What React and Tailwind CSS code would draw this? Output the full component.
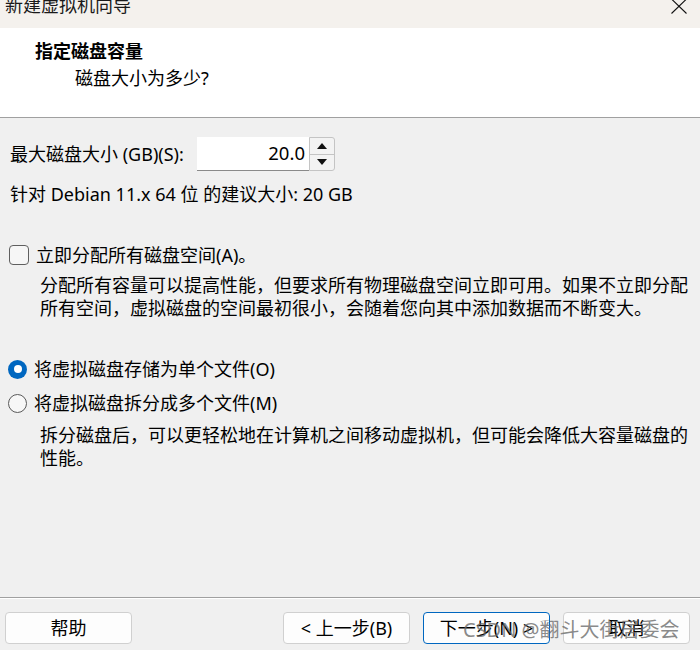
import React from 'react';

const font = "font-['Noto_Sans','Noto_Sans_CJK_SC',sans-serif]";

const Radio = ({ checked }) =>
    checked ? (
        <span className="flex size-[19px] items-center justify-center rounded-full bg-[#0067c0]">
            <span className="block size-[8px] rounded-full bg-white" />
        </span>
    ) : (
        <span className="block size-[19px] rounded-full border border-[#5a5a5a] bg-[#f7f7f7]" />
    );

const Button = ({ children, primary }) => (
    <button
        className={
            primary
                ? 'h-[32px] w-[127px] rounded-[4px] border border-[#0067c0] bg-[#fdfdfd] text-[18px] leading-none text-black'
                : 'h-[32px] w-[127px] rounded-[4px] border border-[#d0d0d0] bg-[#fdfdfd] text-[18px] leading-none text-black'
        }
    >
        {children}
    </button>
);

export default function App() {
    return (
        <div className={`relative flex h-[650px] w-[700px] flex-col overflow-hidden bg-[#f0f0f0] text-black ${font}`}>
            {/* title bar */}
            <div className="flex h-[28px] shrink-0 items-start justify-between bg-[#f4f1ed] pl-[5px] pr-[13px]">
                <span className="-mt-[4px] text-[18px] leading-[18px] text-[#1a1a1a]">新建虚拟机向导</span>
                <svg className="-mt-[1px]" width="16" height="15" viewBox="0 0 16 15">
                    <path d="M0.5 0 L15.5 14.5 M15.5 0 L0.5 14.5" stroke="#111" strokeWidth="1.1" fill="none" />
                </svg>
            </div>

            {/* header */}
            <div className="h-[90px] shrink-0 border-b border-[#a0a0a0] bg-white pt-[11px]">
                <div className="pl-[35px] text-[18px] font-bold leading-[24px]">指定磁盘容量</div>
                <div className="mt-[3px] pl-[75px] text-[18px] leading-[24px]">磁盘大小为多少?</div>
            </div>

            {/* body */}
            <div className="flex flex-1 flex-col pl-[10px] pr-[8px] text-[18px]">
                <div className="mt-[19px] flex h-[34px] items-center">
                    <span className="w-[187px] leading-[24px]">最大磁盘大小 (GB)(S):</span>
                    <div className="flex h-[34px] w-[112px] items-center justify-end border-b border-[#8a8a8a] bg-white pr-[4px] text-[18.5px] leading-none">
                        20.0
                    </div>
                    <div className="flex h-[34px] w-[26px] flex-col overflow-hidden rounded-r-[3px] border border-[#c4c4c4] bg-[#f3f3f3]">
                        <div className="flex flex-1 items-center justify-center border-b border-[#c4c4c4]">
                            <svg width="10" height="6" viewBox="0 0 10 6"><path d="M0 6 L5 0 L10 6 Z" fill="#111" /></svg>
                        </div>
                        <div className="flex flex-1 items-center justify-center">
                            <svg width="10" height="6" viewBox="0 0 10 6"><path d="M0 0 L5 6 L10 0 Z" fill="#111" /></svg>
                        </div>
                    </div>
                </div>

                <div className="mt-[11px] leading-[24px]">针对 Debian 11.x 64 位 的建议大小: 20 GB</div>

                <div className="mt-[37px] flex h-[24px] items-center">
                    <span className="ml-[-1px] mr-[7px] size-[20px] rounded-[4px] border border-[#5f5f5f] bg-[#f6f6f6]" />
                    <span className="leading-[24px]">立即分配所有磁盘空间(A)。</span>
                </div>
                <p className="mt-[7px] pl-[30px] leading-[23px]">
                    分配所有容量可以提高性能，但要求所有物理磁盘空间立即可用。如果不立即分配所有空间，虚拟磁盘的空间最初很小，会随着您向其中添加数据而不断变大。
                </p>

                <div className="mt-[37px] flex h-[24px] items-center gap-[7px]">
                    <span className="ml-[-2px]"><Radio checked /></span>
                    <span className="leading-[24px]">将虚拟磁盘存储为单个文件(O)</span>
                </div>
                <div className="mt-[10px] flex h-[24px] items-center gap-[7px]">
                    <span className="ml-[-2px]"><Radio /></span>
                    <span className="leading-[24px]">将虚拟磁盘拆分成多个文件(M)</span>
                </div>
                <p className="mt-[9px] pl-[30px] leading-[23px]">
                    拆分磁盘后，可以更轻松地在计算机之间移动虚拟机，但可能会降低大容量磁盘的性能。
                </p>
            </div>

            {/* footer */}
            <div className="h-[53px] shrink-0 border-t border-[#a0a0a0]">
                <div className="h-[1px] bg-white" />
                <div className="flex items-center justify-between pl-[5px] pr-[10px] pt-[13px]">
                    <Button>帮助</Button>
                    <div className="flex gap-[13px]">
                        <Button>&lt; 上一步(B)</Button>
                        <Button primary>下一步(N) &gt;</Button>
                        <Button>取消</Button>
                    </div>
                </div>
            </div>

            <span className="pointer-events-none absolute left-[463px] top-[616px] text-[20px] leading-[28px] text-[#6b6b6b]/80">
                CSDN @翻斗大街居委会
            </span>
        </div>
    );
}
